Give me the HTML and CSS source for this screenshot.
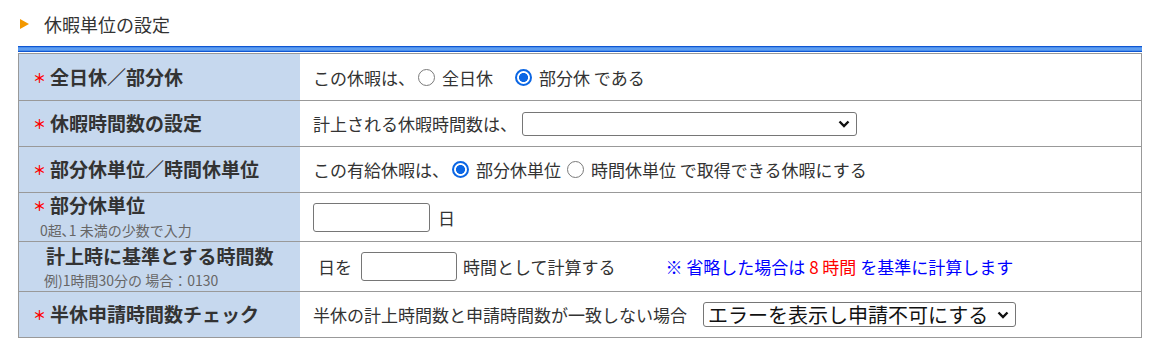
FILE: index.html
```html
<!doctype html>
<html lang="ja">

<head>
    <meta charset="utf-8">
    <title>休暇単位の設定</title>
    <meta name="viewport" content="width=device-width, initial-scale=1">
    <link rel="stylesheet" href="styles.css">
</head>

<body>
    <div class="page">
        <div class="section-title"><span class="arrow"></span>休暇単位の設定</div>
        <div class="title-bar"></div>

        <div class="form">
            <div class="label"><div><span class="req">＊</span>全日休／部分休</div></div>
            <div class="value">
                <span>この休暇は、</span>
                <label class="opt"><input type="radio" name="day-type">全日休</label>
                <label class="opt opt-wide"><input type="radio" name="day-type" checked>部分休 である</label>
            </div>

            <div class="label"><div><span class="req">＊</span>休暇時間数の設定</div></div>
            <div class="value">
                <span>計上される休暇時間数は、</span>
                <span class="select sel-hours">
                    <select><option></option></select>
                    <svg class="chev" width="12" height="8" viewBox="0 0 12 8"><path d="M1.5 1.5 L6 6 L10.5 1.5" fill="none" stroke="#111" stroke-width="2.4"/></svg>
                </span>
            </div>

            <div class="label"><div><span class="req">＊</span>部分休単位／時間休単位</div></div>
            <div class="value">
                <span>この有給休暇は、</span>
                <label class="opt"><input type="radio" name="unit" checked>部分休単位</label>
                <label class="opt opt-tight"><input type="radio" name="unit">時間休単位 で取得できる休暇にする</label>
            </div>

            <div class="label">
                <div><span class="req">＊</span>部分休単位</div>
                <div class="sub sub-unit">0超､1 未満の少数で入力</div>
            </div>
            <div class="value">
                <input type="text" class="num num-unit">
                <span>日</span>
            </div>

            <div class="label">
                <div class="plain">計上時に基準とする時間数</div>
                <div class="sub sub-base">例)1時間30分の 場合：0130</div>
            </div>
            <div class="value value-base">
                <span>日を</span>
                <input type="text" class="num num-base">
                <span>時間として計算する</span>
                <span class="note">※ 省略した場合は <span class="em">8 時間</span> を基準に計算します</span>
            </div>

            <div class="label"><div><span class="req">＊</span>半休申請時間数チェック</div></div>
            <div class="value">
                <span>半休の計上時間数と申請時間数が一致しない場合</span>
                <span class="select sel-check">
                    <select><option>エラーを表示し申請不可にする</option></select>
                    <svg class="chev" width="12" height="8" viewBox="0 0 12 8"><path d="M1.5 1.5 L6 6 L10.5 1.5" fill="none" stroke="#111" stroke-width="2.4"/></svg>
                </span>
            </div>
        </div>
    </div>
</body>

</html>
```

FILE: styles.css
```css
html,
body {
    margin: 0;
    padding: 0;
    background: #fff;
    color: #333;
    font-family: "Noto Sans CJK JP", sans-serif;
}

.page {
    width: 1124px;
    padding-left: 18px;
}

.section-title {
    display: flex;
    align-items: center;
    height: 44px;
    padding: 2px 0 0 2px;
    font-size: 18px;
}

.section-title .arrow {
    width: 0;
    height: 0;
    border-left: 9px solid #f39800;
    border-top: 5px solid transparent;
    border-bottom: 5px solid transparent;
    margin-right: 15px;
}

.title-bar {
    height: 4px;
    background: linear-gradient(#3f86ea, #6aa6f2 50%, #3f86ea);
    border-top: 1px solid #0f56d2;
    border-bottom: 1px solid #0f56d2;
    margin-bottom: 1px;
}

.form {
    display: grid;
    grid-template-columns: 281px 1fr;
    grid-template-rows: 47px 46px 46px 49px 50px 46px;
    border: 1px solid #999;
    border-bottom: 0;
}

.label,
.value {
    box-sizing: border-box;
    border-bottom: 1px solid #999;
}

.label {
    display: flex;
    flex-direction: column;
    justify-content: center;
    background: #c6d8ee;
    padding-left: 14px;
    font-size: 19px;
    font-weight: bold;
    line-height: 24px;
}

.label .req {
    display: inline-block;
    width: 17px;
    color: #f00;
    font-size: 13px;
    vertical-align: 2px;
}

.label .plain {
    margin-left: 13px;
    margin-top: 3px;
}

.label .sub {
    font-size: 14px;
    font-weight: normal;
    color: #666;
    line-height: 24px;
}

.sub-unit {
    margin-left: 7px;
}

.sub-base {
    margin-left: 11px;
}

.value {
    display: flex;
    align-items: center;
    padding-left: 13px;
    font-size: 17px;
    white-space: nowrap;
}

.value-base {
    padding-left: 18px;
}

.opt {
    display: flex;
    align-items: center;
}

.opt input {
    appearance: none;
    box-sizing: border-box;
    flex: none;
    width: 17px;
    height: 17px;
    margin: 0 7px 0 3px;
    border: 1.6px solid #7a7a7a;
    border-radius: 50%;
    background: #fff;
}

.opt input:checked {
    border: 2.4px solid #0b66e4;
    background: radial-gradient(circle, #0b66e4 0 4.2px, #fff 4.8px);
}

.opt-wide {
    margin-left: 19px;
}

.opt-tight {
    margin-left: 3px;
}

.select {
    position: relative;
    display: inline-flex;
}

.select select {
    appearance: none;
    width: 100%;
    box-sizing: border-box;
    border: 1px solid #767676;
    border-radius: 3px;
    background: #fff;
    color: #111;
    font-family: "Noto Sans CJK JP", sans-serif;
}

.select .chev {
    position: absolute;
    top: 50%;
    right: 7px;
    margin-top: -4px;
    pointer-events: none;
}

.sel-hours {
    width: 335px;
    margin-left: 5px;
}

.sel-hours select {
    height: 24px;
    font-size: 15px;
}

.sel-check {
    width: 313px;
    margin-left: 16px;
}

.sel-check select {
    height: 25px;
    padding: 0 4px;
    font-size: 20px;
    line-height: 23px;
}

.num {
    box-sizing: border-box;
    height: 29px;
    border: 1px solid #767676;
    border-radius: 3px;
}

.num-unit {
    width: 117px;
    margin-right: 8px;
}

.num-base {
    width: 96px;
    margin: 0 6px 0 9px;
}

.note {
    margin-left: 50px;
    color: #00f;
}

.note .em {
    color: #f00;
}
```
